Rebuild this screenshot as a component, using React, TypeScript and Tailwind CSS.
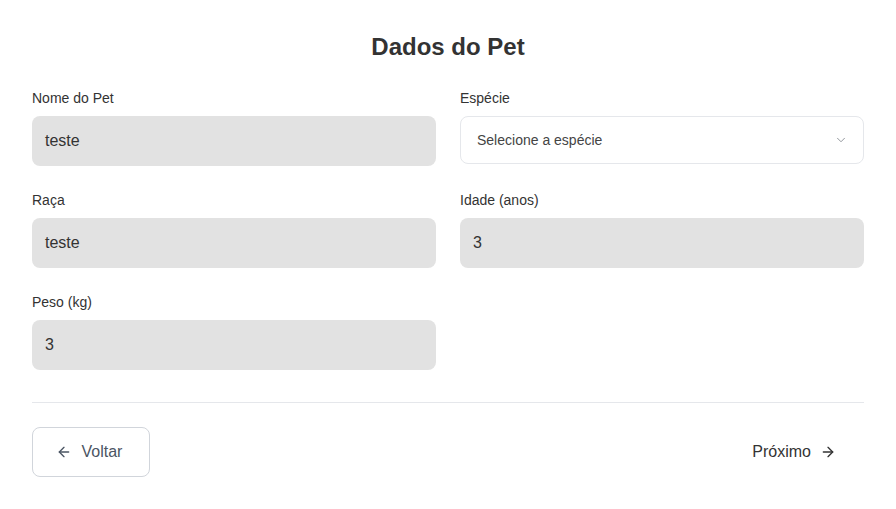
import React from "react";

const font = { fontFamily: '"Liberation Sans", Arial, sans-serif' };

function Field({ label, value }: { label: string; value: string }) {
  return (
    <div className="flex flex-col">
      <label className="text-[14px] leading-[20px] text-[#333333]">{label}</label>
      <div className="mt-[8px] h-[50px] rounded-[8px] bg-[#e2e2e2] px-[13px] flex items-center text-[16px] text-[#333333]">
        {value}
      </div>
    </div>
  );
}

export default function App() {
  return (
    <div style={font} className="w-[896px] h-[509px] bg-white px-[32px] pt-[32px]">
      <h1 className="text-center text-[24px] leading-[30px] font-bold text-[#333333]">Dados do Pet</h1>
      <div className="mt-[26px] grid grid-cols-2 gap-x-[24px] gap-y-[24px]">
        <Field label="Nome do Pet" value="teste" />
        <div className="flex flex-col">
          <label className="text-[14px] leading-[20px] text-[#333333]">Espécie</label>
          <div className="mt-[8px] h-[48px] rounded-[8px] border border-[#e5e7eb] bg-white pl-[16px] pr-[15px] flex items-center justify-between text-[14px] text-[#444444]">
            <span>Selecione a espécie</span>
            <svg width="14" height="14" viewBox="0 0 24 24" fill="none" stroke="#8b8f96" strokeWidth="1.6" strokeLinecap="round" strokeLinejoin="round">
              <path d="M6 9l6 6 6-6" />
            </svg>
          </div>
        </div>
        <Field label="Raça" value="teste" />
        <Field label="Idade (anos)" value="3" />
        <Field label="Peso (kg)" value="3" />
      </div>
      <div className="mt-[32px] border-t border-[#e5e7eb] pt-[24px] flex items-center justify-between">
        <button className="h-[50px] w-[118px] rounded-[8px] border border-[#d1d5db] bg-white pr-[4px] flex items-center justify-center gap-[10px] text-[16px] text-[#4b5563]">
          <svg width="16" height="16" viewBox="0 0 24 24" fill="none" stroke="currentColor" strokeWidth="2" strokeLinecap="round" strokeLinejoin="round">
            <path d="M19 12H5" />
            <path d="M12 19l-7-7 7-7" />
          </svg>
          <span>Voltar</span>
        </button>
        <button className="h-[50px] pr-[28px] pl-[24px] flex items-center gap-[9px] text-[16px] text-[#333333]">
          <span>Próximo</span>
          <svg width="16" height="16" viewBox="0 0 24 24" fill="none" stroke="currentColor" strokeWidth="2" strokeLinecap="round" strokeLinejoin="round">
            <path d="M5 12h14" />
            <path d="M12 5l7 7-7 7" />
          </svg>
        </button>
      </div>
    </div>
  );
}
